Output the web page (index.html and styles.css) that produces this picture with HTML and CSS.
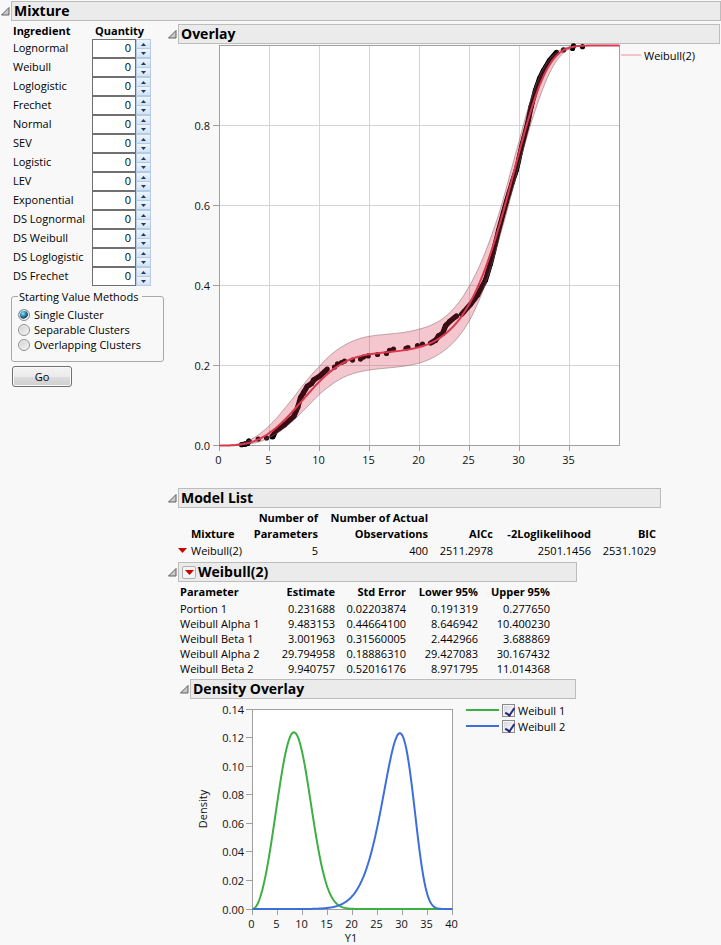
FILE: index.html
```html
<!DOCTYPE html>
<html lang="en">
<head>
    <meta charset="UTF-8">
    <title>Mixture</title>
    <link rel="stylesheet" href="styles.css">
</head>
<body>
<div class="outline-head">
    <button class="disclose" type="button" aria-label="Toggle Mixture"><svg width="10" height="10"><path d="M1.500 9L9 1.500V9Z"/></svg></button>
    <h1>Mixture</h1>
</div>
<div class="report">
    <form class="setup" onsubmit="return false">
        <table class="ingredients">
            <thead>
            <tr><th>Ingredient</th><th>Quantity</th></tr>
            </thead>
            <tbody id="ingredients"></tbody>
        </table>
        <fieldset class="methods">
            <legend>Starting Value Methods</legend>
            <label><input type="radio" name="method" checked>Single Cluster</label>
            <label><input type="radio" name="method">Separable Clusters</label>
            <label><input type="radio" name="method">Overlapping Clusters</label>
        </fieldset>
        <button class="go" type="submit">Go</button>
    </form>

    <div class="results">
        <section>
            <div class="outline-head">
                <button class="disclose" type="button" aria-label="Toggle Overlay"><svg width="10" height="10"><path d="M1.500 9L9 1.500V9Z"/></svg></button>
                <h2>Overlay</h2>
            </div>
            <div class="plot-row overlay">
                <svg id="overlay" width="452" height="426"></svg>
                <div class="legend"><i class="line pink"></i>Weibull(2)</div>
            </div>
        </section>

        <section class="fit model-list">
            <div class="outline-head">
                <button class="disclose" type="button" aria-label="Toggle Model List"><svg width="10" height="10"><path d="M1.500 9L9 1.500V9Z"/></svg></button>
                <h2>Model List</h2>
            </div>
            <table class="data models">
                <colgroup><col class="w13"><col class="w54"><col class="w73"><col class="w110"><col class="w65"><col class="w98"><col class="w65"></colgroup>
                <thead>
                <tr><th></th><th>Mixture</th><th>Number of<br>Parameters</th><th>Number of Actual<br>Observations</th><th>AICc</th><th>-2Loglikelihood</th><th>BIC</th></tr>
                </thead>
                <tbody>
                <tr>
                    <td><button class="menu" type="button" aria-label="Model menu"><svg width="9" height="5"><path d="M0 0H9L4.500 5Z"/></svg></button></td>
                    <td>Weibull(2)</td><td>5</td><td>400</td><td>2511.2978</td><td>2501.1456</td><td>2531.1029</td>
                </tr>
                </tbody>
            </table>
        </section>

        <section class="fit weibull">
            <div class="outline-head">
                <button class="disclose" type="button" aria-label="Toggle Weibull(2)"><svg width="10" height="10"><path d="M1.500 9L9 1.500V9Z"/></svg></button>
                <h2><button class="menu boxed" type="button" aria-label="Weibull(2) menu"><svg width="9" height="5"><path d="M0 0H9L4.500 5Z"/></svg></button>Weibull(2)</h2>
            </div>
            <table class="data params">
                <colgroup><col class="w84"><col class="w71"><col class="w71"><col class="w72"><col class="w72"></colgroup>
                <thead>
                <tr><th>Parameter</th><th>Estimate</th><th>Std Error</th><th>Lower 95%</th><th>Upper 95%</th></tr>
                </thead>
                <tbody>
                <tr><td>Portion 1</td><td>0.231688</td><td>0.02203874</td><td>0.191319</td><td>0.277650</td></tr>
                <tr><td>Weibull Alpha 1</td><td>9.483153</td><td>0.44664100</td><td>8.646942</td><td>10.400230</td></tr>
                <tr><td>Weibull Beta 1</td><td>3.001963</td><td>0.31560005</td><td>2.442966</td><td>3.688869</td></tr>
                <tr><td>Weibull Alpha 2</td><td>29.794958</td><td>0.18886310</td><td>29.427083</td><td>30.167432</td></tr>
                <tr><td>Weibull Beta 2</td><td>9.940757</td><td>0.52016176</td><td>8.971795</td><td>11.014368</td></tr>
                </tbody>
            </table>
            <div class="density-block">
                <div class="outline-head">
                    <button class="disclose" type="button" aria-label="Toggle Density Overlay"><svg width="10" height="10"><path d="M1.500 9L9 1.500V9Z"/></svg></button>
                    <h3>Density Overlay</h3>
                </div>
                <div class="plot-row">
                    <svg id="density" width="284" height="246"></svg>
                    <div class="legend">
                        <label><i class="line green"></i><input type="checkbox" checked>Weibull 1</label>
                        <label><i class="line blue"></i><input type="checkbox" checked>Weibull 2</label>
                    </div>
                </div>
            </div>
        </section>
    </div>
</div>
<script src="script.js"></script>
</body>
</html>
```
FILE: styles.css
```css
* {
    margin: 0;
    padding: 0;
    box-sizing: border-box;
}
body {
    background: #f8f8f8;
    color: #000;
    font: 11px/15px "Open Sans", "Noto Sans", sans-serif;
    padding-top: 1px;
}
button, input {
    font: inherit;
    color: inherit;
}

/* outline headers */
.outline-head {
    display: flex;
}
.outline-head h1,
.outline-head h2,
.outline-head h3 {
    flex: 1;
    display: flex;
    align-items: center;
    height: 20px;
    padding-left: 2px;
    border: 1px solid #bcbcbc;
    background: #ebebeb;
    font-size: 14px;
    line-height: 18px;
    font-weight: 700;
    white-space: nowrap;
}
.disclose {
    width: 11px;
    padding-bottom: 1px;
    border: 0;
    background: none;
    text-align: left;
}
.disclose svg {
    display: block;
}
.disclose path {
    fill: #c8c8c8;
    stroke: #606060;
}
.report {
    display: grid;
    grid-template-columns: 153px 1fr;
    column-gap: 3px;
    padding-left: 11px;
}

/* left panel */
.setup {
    padding-top: 1px;
}
.ingredients {
    border-collapse: collapse;
}
.ingredients th {
    height: 17px;
    padding-bottom: 1px;
    text-align: left;
    padding-left: 2px;
}
.ingredients th + th {
    padding-left: 3px;
}
.ingredients td {
    height: 19px;
}
.ingredients td:first-child {
    width: 81px;
    padding: 0 0 2px 2px;
    white-space: nowrap;
}
.spin {
    display: flex;
}
.spin input {
    width: 44px;
    height: 19px;
    padding: 0 4px 2px;
    border: 1px solid #707070;
    background: #fff;
    text-align: right;
}
.spin-buttons {
    display: flex;
    flex-direction: column;
    width: 15px;
}
.spin-buttons button {
    display: flex;
    align-items: center;
    justify-content: center;
    height: 10px;
    border: 1px solid #b5cbe4;
    background: linear-gradient(#eef5fc, #d3e3f4);
}
.spin-buttons button + button {
    height: 9px;
    border-top: 0;
}
.spin-buttons path {
    fill: #1f3a5f;
}
.methods {
    margin-top: 3px;
    padding: 3px 6px 9px;
    border: 1px solid #a8a8a8;
    border-radius: 3px;
}
.methods legend {
    padding: 0 4px 0 1px;
}
.methods label {
    display: flex;
    align-items: center;
    height: 15px;
    gap: 4px;
}
.methods input {
    appearance: none;
    width: 12px;
    height: 12px;
    border: 1px solid #909090;
    border-radius: 50%;
    background: linear-gradient(135deg, #cfcfcf, #f6f6f6);
    box-shadow: inset 0 0 0 1px #f2f2f2;
}
.methods input:checked {
    background: radial-gradient(circle at 40% 35%, #9be0f5 0, #2f8fb8 30%, #123f5e 55%, #e8e8e8 62%);
}
.go {
    display: block;
    width: 60px;
    height: 21px;
    margin: 4px 0 0 1px;
    padding-bottom: 1px;
    border: 1px solid #707070;
    border-radius: 3px;
    background: linear-gradient(#f3f3f3 0, #ebebeb 50%, #dddddd 50%, #cfcfcf 100%);
    box-shadow: inset 0 0 0 1px #fafafa;
}

/* right panel */
.results {
    padding-top: 3px;
    padding-right: 1px;
}
.plot-row {
    display: flex;
}
.plot-row svg {
    display: block;
    flex: none;
}
svg text {
    fill: #111;
}
.overlay svg {
    overflow: visible;
}
.overlay .legend {
    display: flex;
    height: 22px;
    align-items: center;
    gap: 3px;
    margin-left: 2px;
}
.line {
    display: block;
    width: 33px;
    height: 2px;
}
.pink {
    width: 20px;
    background: #f2c4ca;
}
.green {
    background: #3cb043;
}
.blue {
    background: #3d6fdc;
}
.fit {
    width: fit-content;
}
.model-list {
    margin-top: 18px;
}
.weibull {
    margin-top: 3px;
}
.data {
    table-layout: fixed;
    border-collapse: collapse;
    white-space: nowrap;
}
.data th,
.data td {
    text-align: right;
    height: 15px;
}
.data th {
    vertical-align: bottom;
}
.models {
    width: 478px;
    margin: 2px 5px 0 11px;
}
.models th {
    line-height: 16px;
}
.models td {
    height: 17px;
}
.models th:nth-child(-n+2),
.models td:nth-child(-n+2),
.params th:first-child,
.params td:first-child {
    text-align: left;
}
.params {
    width: 370px;
    margin: 1px 27px 0 13px;
}
.params thead th {
    height: 18px;
    padding-bottom: 2px;
}
.w13 { width: 13px; }
.w54 { width: 54px; }
.w65 { width: 65px; }
.w71 { width: 71px; }
.w72 { width: 72px; }
.w73 { width: 73px; }
.w84 { width: 84px; }
.w98 { width: 98px; }
.w110 { width: 110px; }
.menu {
    display: flex;
    align-items: center;
    justify-content: center;
    border: 0;
    background: none;
}
.menu path {
    fill: #c80000;
}
.boxed {
    width: 14px;
    height: 13px;
    margin: 0 2px 0 1px;
    border: 1px solid #b0b0b0;
    border-radius: 2px;
    background: #f3f3f3;
}
.density-block {
    margin: 3px 1px 0 12px;
}
.density-block .legend {
    padding-top: 3px;
    margin-left: 3px;
}
.density-block label {
    display: flex;
    align-items: center;
    height: 16px;
    gap: 3px;
}
.density-block input {
    appearance: none;
    width: 13px;
    height: 13px;
    border: 1px solid #8a8a8a;
    background: linear-gradient(135deg, #d0d4dc, #fff);
    box-shadow: inset 0 0 0 1px #f4f4f4;
}
.density-block input:checked::before {
    content: "";
    display: block;
    width: 4px;
    height: 8px;
    margin: 1px 0 0 4px;
    border: solid #27277d;
    border-width: 0 2px 2px 0;
    transform: rotate(34deg);
}
```
FILE: script.js
```javascript
var names = ["Lognormal", "Weibull", "Loglogistic", "Frechet", "Normal", "SEV", "Logistic", "LEV",
    "Exponential", "DS Lognormal", "DS Weibull", "DS Loglogistic", "DS Frechet"];

document.getElementById("ingredients").innerHTML = names.map(function (name, i) {
    return '<tr><td><label for="q' + i + '">' + name + '</label></td><td><div class="spin">' +
        '<input id="q' + i + '" type="text" value="0">' +
        '<div class="spin-buttons">' +
        '<button type="button" aria-label="Increase ' + name + '"><svg width="5" height="3"><path d="M0 3L2.5 0L5 3Z"/></svg></button>' +
        '<button type="button" aria-label="Decrease ' + name + '"><svg width="5" height="3"><path d="M0 0H5L2.5 3Z"/></svg></button>' +
        '</div></div></td></tr>';
}).join("");

// fitted parameters
var portion = 0.231688, a1 = 9.483153, b1 = 3.001963, a2 = 29.794958, b2 = 9.940757;

function cdf(x, a, b) {
    return 1 - Math.exp(-Math.pow(x / a, b));
}
function pdf(x, a, b) {
    return b / a * Math.pow(x / a, b - 1) * Math.exp(-Math.pow(x / a, b));
}
function mix(x) {
    return portion * cdf(x, a1, b1) + (1 - portion) * cdf(x, a2, b2);
}
function lerp(table, x) {
    for (var i = 1; i < table.length; i++) {
        if (x <= table[i][0]) {
            var p = table[i - 1], q = table[i];
            return p[1] + (q[1] - p[1]) * (x - p[0]) / (q[0] - p[0]);
        }
    }
    return table[table.length - 1][1];
}
function curve(f, sx, sy) {
    var pts = [];
    for (var x = 0; x <= 40.001; x += 0.2) {
        pts.push(sx(x).toFixed(2) + "," + sy(f(x)).toFixed(2));
    }
    return pts;
}
function line(x1, y1, x2, y2, color) {
    return '<path d="M' + x1 + ' ' + y1 + 'L' + x2 + ' ' + y2 + '" stroke="' + color + '"/>';
}
function text(x, y, anchor, s) {
    return '<text x="' + x + '" y="' + y + '" text-anchor="' + anchor + '">' + s + '</text>';
}

// ---- overlay: cdf, confidence band, observations
// logit half width of the band
var half = [[0, 0.8], [2, 0.7], [5, 0.48], [7.4, 0.35], [10, 0.26], [12.4, 0.24], [15, 0.24], [20, 0.23],
    [22.1, 0.21], [25, 0.19], [26.8, 0.16], [28.1, 0.13], [30, 0.15], [31.1, 0.22], [32, 0.3], [34, 0.45], [40, 0.5]];

function band(sign) {
    return function (x) {
        var f = Math.min(Math.max(mix(x), 1e-6), 1 - 1e-6);
        var z = Math.log(f / (1 - f)) + sign * lerp(half, x);
        return 1 / (1 + Math.exp(-z));
    };
}

var single = [[2.6, 0.004], [2.93, 0.011], [3.87, 0.016], [4.7, 0.019], [5.33, 0.022], [11.5, 0.196], [11.8, 0.204],
    [12.2, 0.2075], [12.5, 0.211], [13.3, 0.2135], [14.1, 0.216], [14.4, 0.221], [14.87, 0.224], [15.8, 0.2275],
    [16.7, 0.23], [17, 0.238], [17.4, 0.241], [18.65, 0.243], [18.85, 0.245], [19.8, 0.25], [20.3, 0.2535],
    [34.4, 0.989], [35.3, 0.9925], [35.4, 0.999], [36.3, 0.997]];
var runs = [
    [[2.2, 0.002], [2.8, 0.005], [2.95, 0.011]],
    [[5.25, 0.022], [5.4, 0.026], [5.6, 0.036], [6.5, 0.052], [7.43, 0.073], [7.83, 0.096], [8.1, 0.12], [8.4, 0.132], [8.77, 0.148],
        [9.2, 0.155], [9.43, 0.164], [10.1, 0.175], [10.77, 0.191]],
    [[21.1, 0.256], [21.6, 0.263], [21.9, 0.274], [22.3, 0.28], [22.6, 0.299], [23, 0.31], [23.7, 0.324]],
    [[24.2, 0.328], [25.1, 0.353], [25.8, 0.376], [26.6, 0.414], [27.1, 0.455], [27.4, 0.485], [27.9, 0.537], [28.4, 0.583],
        [28.7, 0.61], [29.3, 0.66], [29.7, 0.69], [30.2, 0.746], [30.8, 0.804], [31.15, 0.846], [31.6, 0.888],
        [32, 0.917], [32.4, 0.9375], [33.0, 0.9625], [33.7, 0.983]]
];

function drawOverlay() {
    function sx(x) { return 52.5 + x * 10; }
    function sy(y) { return 401.5 - y * 400; }
    var s = '<rect x="52.5" y="1.5" width="400" height="400" fill="#fff"/>', i;
    for (i = 5; i < 40; i += 5) {
        s += line(sx(i), 1, sx(i), 401, "#d4d4d4");
    }
    for (i = 2; i < 10; i += 2) {
        s += line(52, sy(i / 10), 452, sy(i / 10), "#d4d4d4");
    }
    s += '<rect x="52.5" y="1.5" width="400" height="400" fill="none" stroke="#a0a0a0"/>';
    for (i = 0; i < 10; i += 2) {
        s += line(46, sy(i / 10), 52, sy(i / 10), "#a0a0a0") + text(43, sy(i / 10) + 4, "end", (i / 10).toFixed(1));
    }
    for (i = 0; i < 40; i += 5) {
        s += line(sx(i), 402, sx(i), 407, "#a0a0a0") + text(sx(i) - 1, 420, "middle", i);
    }
    var dots = single.slice();
    runs.forEach(function (run) {
        for (var k = 1; k < run.length; k++) {
            var p = run[k - 1], q = run[k];
            var n = Math.ceil(Math.hypot((q[0] - p[0]) * 10, (q[1] - p[1]) * 400) / 2);
            for (var j = 0; j <= n; j++) {
                dots.push([p[0] + (q[0] - p[0]) * j / n, p[1] + (q[1] - p[1]) * j / n]);
            }
        }
    });
    dots.forEach(function (d) {
        s += '<circle cx="' + sx(d[0]).toFixed(1) + '" cy="' + sy(d[1]).toFixed(1) + '" r="2.6"/>';
    });
    var up = curve(band(1), sx, sy), low = curve(band(-1), sx, sy);
    s += '<polygon points="' + up.concat(low.slice().reverse()).join(" ") + '" fill="#d32f45" fill-opacity=".27"/>';
    s += '<g fill="none"><polyline points="' + up.join(" ") + '" stroke="#806068" stroke-opacity=".5"/>';
    s += '<polyline points="' + low.join(" ") + '" stroke="#806068" stroke-opacity=".5"/>';
    s += '<polyline points="' + curve(mix, sx, sy).join(" ") + '" stroke="#d8394f" stroke-width="2"/></g>';
    document.getElementById("overlay").innerHTML = s;
}

// ---- component densities
function drawDensity() {
    function sx(x) { return 73.5 + x * 5; }
    function sy(y) { return 210 - y * 1425; }
    var s = '<rect x="73.5" y="10.5" width="200" height="200" fill="#fff" stroke="#a0a0a0"/>', i, y;
    for (i = 0; i <= 14; i += 2) {
        y = Math.round(210.5 - i * 14.28) - 0.5;
        s += line(67, y, 73, y, "#a0a0a0") + text(65, y + 4, "end", (i / 100).toFixed(2));
    }
    for (i = 0; i <= 40; i += 5) {
        s += line(sx(i), 211, sx(i), 216, "#a0a0a0") + text(sx(i) - 1, 229, "middle", i);
    }
    s += text(172, 243, "middle", "Y1");
    s += '<text transform="translate(28 110) rotate(-90)" text-anchor="middle">Density</text>';
    s += '<g fill="none" stroke-width="2">';
    s += '<polyline stroke="#3cb043" points="' + curve(function (x) { return pdf(x, a1, b1); }, sx, sy).join(" ") + '"/>';
    s += '<polyline stroke="#3d6fdc" points="' + curve(function (x) { return pdf(x, a2, b2); }, sx, sy).join(" ") + '"/></g>';
    document.getElementById("density").innerHTML = s;
}

drawOverlay();
drawDensity();
```
